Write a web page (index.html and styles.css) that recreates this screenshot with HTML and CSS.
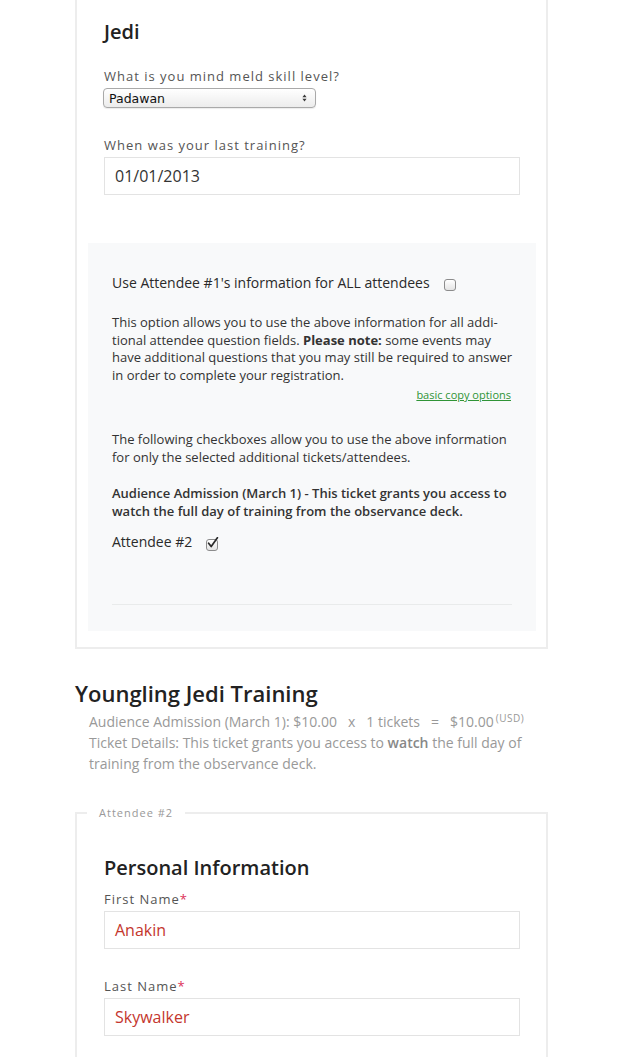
FILE: index.html
```html
<!DOCTYPE html>
<html lang="en">
<head>
<meta charset="utf-8">
<title>Registration – Attendee Information</title>
<link rel="stylesheet" href="styles.css">
</head>
<body>
<div class="page">
  <div class="attendee-box">
    <h3 class="section-title">Jedi</h3>

    <div class="field field-first">
      <label class="field-label">What is you mind meld skill level?</label>
      <div class="select-box">
        <span>Padawan</span>
        <svg class="select-arrows" width="5" height="8" viewBox="0 0 5 8"><path d="M0.4 3.2 L2.5 0.4 L4.6 3.2 Z M0.4 4.8 L2.5 7.6 L4.6 4.8 Z" fill="#3a3a3a"/></svg>
      </div>
    </div>

    <div class="field field-next">
      <label class="field-label">When was your last training?</label>
      <div class="text-input">01/01/2013</div>
    </div>

    <div class="copy-box">
      <div class="copy-all">
        <span>Use Attendee #1's information for ALL attendees</span>
        <span class="checkbox checkbox-all"></span>
      </div>
      <p class="copy-note">This option allows you to use the above information for all addi-<br>tional attendee question fields. <strong>Please note:</strong> some events may<br>have additional questions that you may still be required to answer<br>in order to complete your registration.</p>
      <a class="copy-link" href="#">basic copy options</a>
      <p class="copy-intro">The following checkboxes allow you to use the above information for only the selected additional tickets/attendees.</p>
      <p class="copy-ticket">Audience Admission (March 1) - This ticket grants you access to watch the full day of training from the observance deck.</p>
      <div class="copy-attendee">
        <span>Attendee #2</span>
        <span class="checkbox checkbox-checked">
          <svg width="14" height="14" viewBox="0 0 14 14"><path d="M2.6 6.2 L5.2 9.6 L11.4 0.8" fill="none" stroke="#2a2a2a" stroke-width="1.7" stroke-linejoin="round" stroke-linecap="round"/></svg>
        </span>
      </div>
      <div class="copy-rule"></div>
    </div>
  </div>

  <section class="event">
    <h2 class="event-title">Youngling Jedi Training</h2>
    <div class="ticket-line">Audience Admission (March 1): $10.00<span class="op">x</span>1 tickets<span class="op">=</span>$10.00<span class="currency">(USD)</span></div>
    <p class="ticket-details">Ticket Details: This ticket grants you access to <strong>watch</strong> the full day of training from the observance deck.</p>
  </section>

  <fieldset class="attendee-fieldset">
    <legend>Attendee #2</legend>
    <h3 class="section-title personal-title">Personal Information</h3>
    <div class="field field-name">
      <label class="field-label">First Name<span class="req">*</span></label>
      <div class="text-input filled">Anakin</div>
    </div>
    <div class="field field-next">
      <label class="field-label">Last Name<span class="req">*</span></label>
      <div class="text-input filled">Skywalker</div>
    </div>
  </fieldset>
</div>
</body>
</html>
```

FILE: styles.css
```css
* { box-sizing: border-box; }

body {
  margin: 0;
  background: #fff;
  font-family: "Open Sans", "Noto Sans", sans-serif;
  color: #333;
}

.page {
  width: 473px;
  margin-left: 75px;
}

.attendee-box {
  border: 2px solid #ededed;
  border-top: 0;
  padding: 20px 26px 16px 27px;
}

.section-title {
  margin: 0;
  font-size: 20px;
  line-height: 24px;
  font-weight: 600;
  color: #222;
}

.field-label {
  display: block;
  font-size: 13px;
  line-height: 18px;
  letter-spacing: 1px;
  color: #555;
}

.field-first { margin-top: 23px; }
.field-next { margin-top: 28px; }
.field-name { margin-top: 10px; }

.select-box {
  display: flex;
  align-items: center;
  justify-content: space-between;
  margin: 3px 0 0 -1px;
  width: 213px;
  height: 20px;
  padding: 0 8px 0 5px;
  border: 1px solid #a9a9a9;
  border-radius: 4px;
  background: linear-gradient(#ffffff, #ececec);
  box-shadow: 0 1px 1px rgba(0, 0, 0, 0.08);
  font-family: "DejaVu Sans", sans-serif;
  font-size: 12.5px;
  color: #111;
}

.text-input {
  margin-top: 3px;
  height: 38px;
  border: 1px solid #e3e3e3;
  padding: 7px 10px;
  font-size: 16px;
  line-height: 22px;
  color: #333;
  background: #fff;
}

.text-input.filled { color: #c4362d; }

.req { color: #dc3158; }

.copy-box {
  margin: 48px -16px 0;
  background: #f8f9fa;
  padding: 30px 24px 26px;
  font-size: 13px;
  line-height: 17.5px;
  color: #333;
}

.copy-all,
.copy-attendee {
  display: flex;
  align-items: flex-start;
  font-size: 14px;
  line-height: 20px;
  color: #2a2a2a;
}

.checkbox {
  flex: none;
  position: relative;
  width: 12px;
  height: 12px;
  border: 1px solid #8c8c8c;
  border-radius: 3px;
  background: linear-gradient(#ffffff, #e4e4e4);
}

.checkbox-all {
  margin: 6px 0 0 14px;
}

.checkbox-checked {
  margin: 7px 0 0 14px;
}

.checkbox-checked svg {
  position: absolute;
  left: -1px;
  top: -3px;
}

.copy-note {
  margin: 21px -4px 0 0;
  white-space: nowrap;
}

.copy-link {
  display: block;
  margin-top: 3px;
  padding-right: 1px;
  text-align: right;
  font-size: 11px;
  line-height: 15px;
  color: #2f9436;
  text-decoration: underline;
}

.copy-intro {
  margin: 29px 0 0;
}

.copy-ticket {
  margin: 18px 0 0;
  line-height: 18px;
  font-weight: 600;
}

.copy-attendee {
  margin-top: 12px;
}

.copy-rule {
  margin-top: 52px;
  height: 1px;
  background: #e9ebeb;
}

.event {
  margin-top: 30px;
}

.event-title {
  margin: 0;
  font-size: 22px;
  line-height: 28px;
  font-weight: 600;
  color: #222;
}

.ticket-line,
.ticket-details {
  padding-left: 14px;
  font-size: 14px;
  line-height: 21px;
  color: #999;
}

.ticket-line { margin-top: 4px; }

.ticket-details { margin: 0; }
.ticket-details strong { color: #888; font-weight: 600; }

.op { margin: 0 11px; }

.currency {
  margin-left: 2px;
  font-size: 10px;
  letter-spacing: 0.5px;
  vertical-align: 5px;
  line-height: 0;
}

.attendee-fieldset {
  margin: 32px 0 0;
  padding: 0 26px 40px 27px;
  border: 2px solid #ededed;
  min-width: 0;
}

.attendee-fieldset legend {
  margin-left: -17px;
  padding: 0 12px;
  font-size: 11px;
  line-height: 13px;
  letter-spacing: 1px;
  color: #999;
}

.personal-title {
  margin-top: 37px;
}
```
